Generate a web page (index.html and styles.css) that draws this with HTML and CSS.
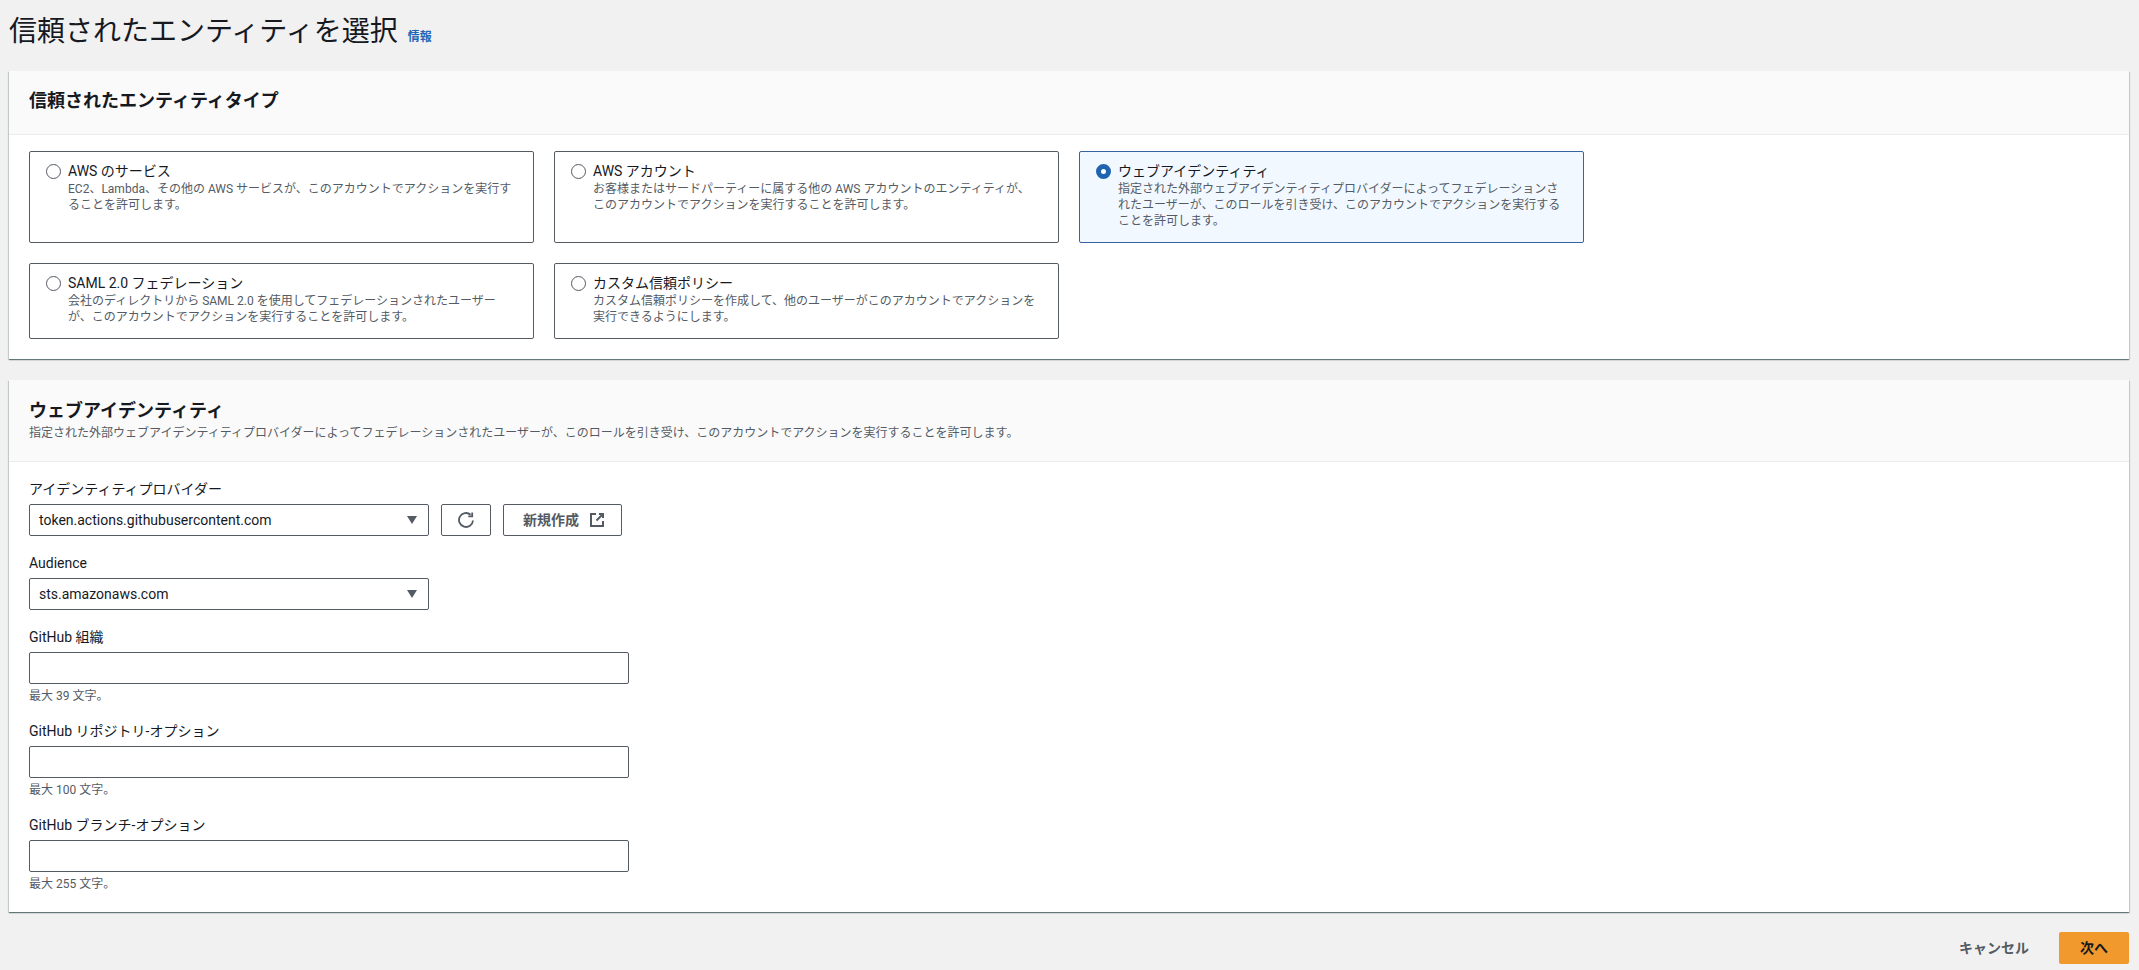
FILE: index.html
```html
<!DOCTYPE html>
<html lang="ja">
<head>
<meta charset="utf-8">
<title>信頼されたエンティティを選択</title>
<link rel="stylesheet" href="styles.css">
</head>
<body>
<main class="page">
  <header class="page-head">
    <h1 class="page-title">信頼されたエンティティを選択</h1>
    <a class="info-link" href="#">情報</a>
  </header>

  <section class="card">
    <div class="card-head card-head-single">
      <h2 class="card-title">信頼されたエンティティタイプ</h2>
    </div>
    <div class="card-body tiles">
      <label class="tile">
        <span class="radio"></span>
        <span class="tile-text">
          <span class="tile-label">AWS のサービス</span>
          <span class="tile-desc">EC2、Lambda、その他の AWS サービスが、このアカウントでアクションを実行することを許可します。</span>
        </span>
      </label>
      <label class="tile">
        <span class="radio"></span>
        <span class="tile-text">
          <span class="tile-label">AWS アカウント</span>
          <span class="tile-desc">お客様またはサードパーティーに属する他の AWS アカウントのエンティティが、このアカウントでアクションを実行することを許可します。</span>
        </span>
      </label>
      <label class="tile tile-selected">
        <span class="radio radio-on"></span>
        <span class="tile-text">
          <span class="tile-label">ウェブアイデンティティ</span>
          <span class="tile-desc">指定された外部ウェブアイデンティティプロバイダーによってフェデレーションされたユーザーが、このロールを引き受け、このアカウントでアクションを実行することを許可します。</span>
        </span>
      </label>
      <label class="tile">
        <span class="radio"></span>
        <span class="tile-text">
          <span class="tile-label">SAML 2.0 フェデレーション</span>
          <span class="tile-desc">会社のディレクトリから SAML 2.0 を使用してフェデレーションされたユーザーが、このアカウントでアクションを実行することを許可します。</span>
        </span>
      </label>
      <label class="tile">
        <span class="radio"></span>
        <span class="tile-text">
          <span class="tile-label">カスタム信頼ポリシー</span>
          <span class="tile-desc">カスタム信頼ポリシーを作成して、他のユーザーがこのアカウントでアクションを実行できるようにします。</span>
        </span>
      </label>
    </div>
  </section>

  <section class="card card-second">
    <div class="card-head card-head-double">
      <h2 class="card-title">ウェブアイデンティティ</h2>
      <p class="card-desc">指定された外部ウェブアイデンティティプロバイダーによってフェデレーションされたユーザーが、このロールを引き受け、このアカウントでアクションを実行することを許可します。</p>
    </div>
    <div class="card-body form">
      <div class="field">
        <div class="field-label">アイデンティティプロバイダー</div>
        <div class="control-row">
          <div class="select">
            <span>token.actions.githubusercontent.com</span>
            <svg class="caret" viewBox="0 0 10 8" aria-hidden="true"><path d="M0 0h10L5 8z"/></svg>
          </div>
          <button class="btn btn-icon" type="button">
            <svg class="icon icon-refresh" viewBox="0 0 16 16" aria-hidden="true"><path d="M15 8.5A7 7 0 1 1 12.6 2.7"/><path d="M14.2 .4v3.9h-3.9"/></svg>
          </button>
          <button class="btn btn-new" type="button">
            <span>新規作成</span>
            <svg class="icon" viewBox="0 0 16 16" aria-hidden="true"><path d="M7 2H2v12h12V9"/><path d="M10 2h4v4"/><path d="M14 2 7.5 8.5"/></svg>
          </button>
        </div>
      </div>
      <div class="field">
        <div class="field-label">Audience</div>
        <div class="control-row">
          <div class="select">
            <span>sts.amazonaws.com</span>
            <svg class="caret" viewBox="0 0 10 8" aria-hidden="true"><path d="M0 0h10L5 8z"/></svg>
          </div>
        </div>
      </div>
      <div class="field">
        <label class="field-label" for="org">GitHub 組織</label>
        <input class="text-input" id="org" type="text">
        <div class="field-help">最大 39 文字。</div>
      </div>
      <div class="field">
        <label class="field-label" for="repo">GitHub リポジトリ-オプション</label>
        <input class="text-input" id="repo" type="text">
        <div class="field-help">最大 100 文字。</div>
      </div>
      <div class="field">
        <label class="field-label" for="branch">GitHub ブランチ-オプション</label>
        <input class="text-input" id="branch" type="text">
        <div class="field-help">最大 255 文字。</div>
      </div>
    </div>
  </section>

  <footer class="actions">
    <button class="action-cancel" type="button">キャンセル</button>
    <button class="action-next" type="button">次へ</button>
  </footer>
</main>
</body>
</html>
```
FILE: styles.css
```css
* { box-sizing: border-box; }

html, body { margin: 0; height: 100%; }

body {
  background: #f1f1f1;
  color: #16191f;
  font-family: Roboto, "Noto Sans CJK JP", sans-serif;
  font-size: 14px;
  line-height: 20px;
  overflow: hidden;
}

.page { padding: 0 10px 0 9px; }

.page-head {
  display: flex;
  align-items: baseline;
  gap: 10px;
  height: 71px;
  padding: 12px 0 0;
}

.page-title {
  margin: 0;
  font-size: 28px;
  font-weight: 400;
  line-height: 40px;
}

.info-link {
  color: #1f66b5;
  font-size: 12px;
  font-weight: 700;
  line-height: 16px;
  text-decoration: none;
}

.card {
  background: #fff;
  box-shadow: 0 1px 1px rgba(0, 28, 36, .45), 1px 1px 1px rgba(0, 28, 36, .12), -1px 1px 1px rgba(0, 28, 36, .12);
}

.card-second { margin-top: 21px; }

.card-head {
  background: #fafafa;
  border-bottom: 1px solid #e9ebed;
  padding-left: 20px;
  padding-right: 20px;
}

.card-head-single { height: 64px; padding-top: 19px; }
.card-head-double { height: 82px; padding-top: 20px; }

.card-title {
  margin: 0;
  font-size: 18px;
  font-weight: 700;
  line-height: 22px;
}

.card-desc {
  margin: 3px 0 0;
  color: #545b64;
  font-size: 12px;
  line-height: 16px;
}

.tiles {
  display: grid;
  grid-template-columns: repeat(3, 505px);
  gap: 20px;
  padding: 16px 20px 20px;
}

.tile {
  display: flex;
  align-items: flex-start;
  gap: 7px;
  padding: 9px 20px 13px 16px;
  background: #fff;
  border: 1px solid #545b64;
  border-radius: 2px;
}

.tile-selected {
  background: #f1f8ff;
  border-color: #3a62a0;
}

.radio {
  flex: none;
  width: 15px;
  height: 15px;
  margin-top: 3px;
  background: #fff;
  border: 1px solid #545b64;
  border-radius: 50%;
}

.radio-on {
  border: 5px solid #2064b0;
}

.tile-text { display: block; min-width: 0; }

.tile-label { display: block; }

.tile-desc {
  display: block;
  color: #545b64;
  font-size: 12px;
  line-height: 16px;
}

.form { padding: 17px 20px 20px; }

.field + .field { margin-top: 17px; }

.field-label {
  display: block;
  margin-bottom: 5px;
}

.control-row {
  display: flex;
  align-items: center;
  gap: 12px;
}

.select {
  display: flex;
  align-items: center;
  justify-content: space-between;
  width: 400px;
  height: 32px;
  padding: 0 11px 0 9px;
  background: #fff;
  border: 1px solid #545b64;
  border-radius: 2px;
}

.caret {
  width: 10px;
  height: 8px;
  fill: #545b64;
}

.btn {
  display: inline-flex;
  align-items: center;
  justify-content: center;
  height: 32px;
  padding: 0;
  background: #fff;
  border: 1px solid #545b64;
  border-radius: 2px;
  color: #545b64;
  font: inherit;
  font-weight: 700;
}

.btn-icon { width: 50px; }
.btn-new { width: 119px; gap: 10px; padding-left: 3px; }

.icon {
  width: 16px;
  height: 16px;
  fill: none;
  stroke: #545b64;
  stroke-width: 2;
}

.icon-refresh { stroke-width: 1.8; }

.text-input {
  display: block;
  width: 600px;
  height: 32px;
  padding: 0 9px;
  background: #fff;
  border: 1px solid #545b64;
  border-radius: 2px;
  font: inherit;
}

.field-help {
  margin-top: 4px;
  color: #545b64;
  font-size: 12px;
  line-height: 16px;
}

.actions {
  display: flex;
  justify-content: flex-end;
  gap: 10px;
  margin-top: 20px;
}

.action-cancel,
.action-next {
  height: 32px;
  padding: 0 20px;
  border: 0;
  border-radius: 2px;
  font: inherit;
  font-weight: 700;
}

.action-cancel {
  background: transparent;
  color: #545b64;
}

.action-next {
  width: 70px;
  padding: 0;
  background: #f2992e;
  color: #16191f;
}
```
